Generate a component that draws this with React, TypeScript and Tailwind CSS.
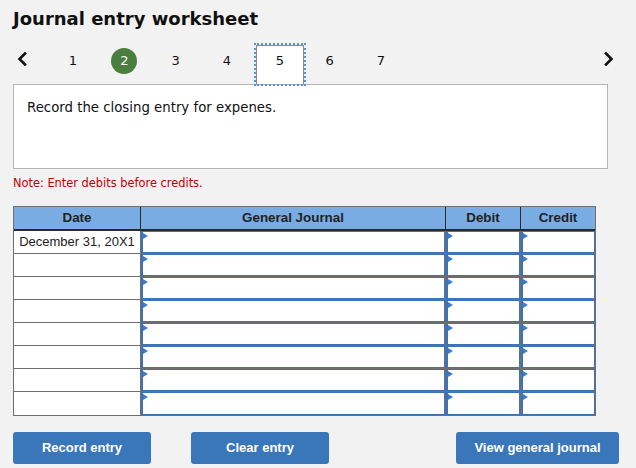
import React from "react";

const verdana = { fontFamily: '"DejaVu Sans", Verdana, sans-serif' };
const arial = { fontFamily: '"Liberation Sans", Arial, sans-serif' };

function Chevron({ dir }: { dir: "left" | "right" }) {
  return (
    <svg width="10" height="14" viewBox="0 0 10 14">
      <polyline
        points={dir === "left" ? "8,1.5 2.5,7 8,12.5" : "2,1.5 7.5,7 2,12.5"}
        fill="none"
        stroke="#111"
        strokeWidth="2.6"
        strokeLinecap="square"
      />
    </svg>
  );
}

function InputCell({ w, last }: { w: string; last?: boolean }) {
  return (
    <div className={`${w} h-full ${last ? "" : "border-r border-[#6f6f6f]"}`}>
      <div className="relative h-full border border-l-2 border-[#3d72b6] bg-white">
        <div className="absolute left-0 top-[1px] h-0 w-0 border-l-[5px] border-y-[3.5px] border-l-[#3a7bd5] border-y-transparent" />
      </div>
    </div>
  );
}

export default function App() {
  const tabs = [1, 2, 3, 4, 5, 6, 7];
  const rows = [0, 1, 2, 3, 4, 5, 6, 7];
  return (
    <div className="w-[636px] h-[468px] overflow-hidden bg-[#f2f2f2] px-[13px]" style={verdana}>
      <h1 className="pt-[8px] text-[18px] leading-[22px] font-bold text-[#111]">Journal entry worksheet</h1>

      <div className="mt-[13px] flex h-[41px] items-start">
        <div className="w-[34.33px] pl-[4px] pt-[9px]">
          <Chevron dir="left" />
        </div>
        {tabs.map((t) => {
          if (t === 2)
            return (
              <div key={t} className="flex w-[51.33px] justify-center pt-[5px]">
                <div className="flex h-[26px] w-[26px] items-center justify-center rounded-full bg-[#4a7e3e] text-[13px] leading-[16px] text-white">
                  2
                </div>
              </div>
            );
          if (t === 5)
            return (
              <div key={t} className="flex h-full w-[51.33px] pl-[3px]">
                <div className="relative z-10 mt-[2px] h-[39px] w-[49px] border border-b-0 border-[#8a8a8a] bg-white pt-[7px] text-center text-[13px] leading-[16px] text-[#111] outline-2 outline-dotted outline-[#5b8fd0]">
                  5
                </div>
              </div>
            );
          return (
            <div key={t} className="w-[51.33px] pt-[10px] text-center text-[13px] leading-[16px] text-[#111]">
              {t}
            </div>
          );
        })}
        <div className="ml-auto mr-[9px] pt-[9px]">
          <Chevron dir="right" />
        </div>
      </div>

      <div className="h-[85px] w-[595px] border border-[#b5b5b5] bg-white pl-[13px] pt-[15px] text-[13.3px] leading-[16px] text-[#111]">
        Record the closing entry for expenes.
      </div>

      <div className="mt-[7px] text-[11.4px] leading-[14px] text-[#c00000]">Note: Enter debits before credits.</div>

      <div className="mt-[16px] w-[583px] border border-[#6f6f6f]" style={arial}>
        <div className="flex h-[24px] border-b-2 border-[#2a2a2a] bg-[#78ace3] text-[13.4px] font-bold text-[#222]">
          <div className="flex w-[127px] items-center justify-center border-r border-[#2a2a2a]">Date</div>
          <div className="flex w-[305px] items-center justify-center border-r border-[#2a2a2a]">General Journal</div>
          <div className="flex w-[75px] items-center justify-center border-r border-[#2a2a2a]">Debit</div>
          <div className="flex w-[74px] items-center justify-center">Credit</div>
        </div>
        {rows.map((r) => (
          <div key={r} className={`flex h-[23px] ${r < 7 ? "border-b border-[#6f6f6f]" : ""}`}>
            <div className="flex w-[127px] items-center justify-center border-r border-[#6f6f6f] bg-white text-[13px] text-[#222]">
              {r === 0 ? "December 31, 20X1" : ""}
            </div>
            <InputCell w="w-[305px]" />
            <InputCell w="w-[75px]" />
            <InputCell w="w-[74px]" last />
          </div>
        ))}
      </div>

      <div className="mt-[16px] flex" style={arial}>
        <button className="h-[32px] w-[138px] rounded-[3px] bg-[#3a76ba] text-[13px] font-bold text-white">Record entry</button>
        <button className="ml-[40px] h-[32px] w-[138px] rounded-[3px] bg-[#3a76ba] text-[13px] font-bold text-white">Clear entry</button>
        <button className="ml-auto mr-[4px] h-[32px] w-[163px] rounded-[3px] bg-[#3a76ba] text-[13px] font-bold text-white">View general journal</button>
      </div>
    </div>
  );
}
